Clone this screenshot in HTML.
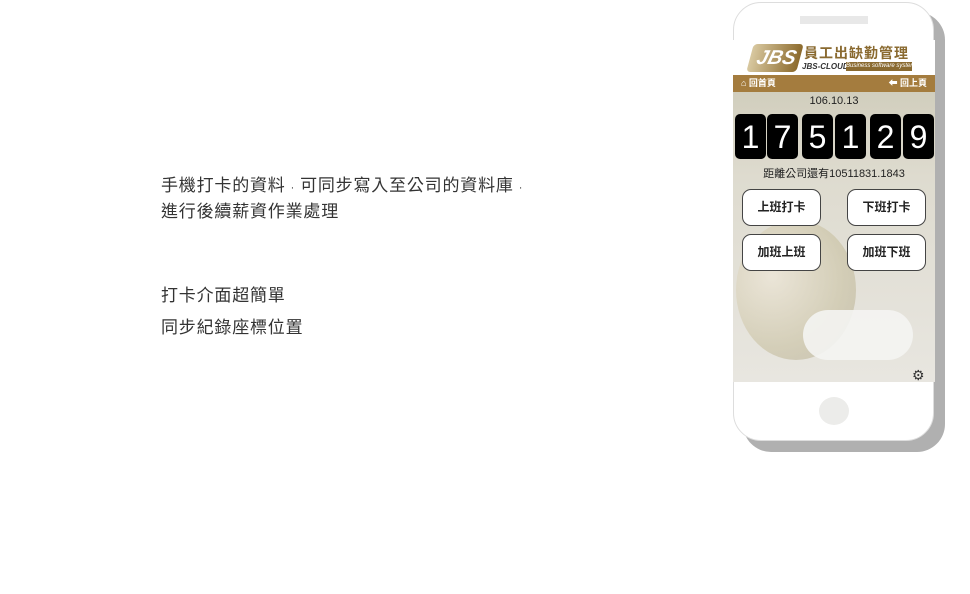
<!DOCTYPE html>
<html><head><meta charset="utf-8"><style>
body{margin:0;width:970px;height:594px;background:#fff;position:relative;overflow:hidden;font-family:"Liberation Sans","Noto Sans CJK TC",sans-serif}
.t{position:absolute;left:161px;font-size:17px;color:#333;line-height:24px;letter-spacing:0.8px}
.abs{position:absolute}
.digit{position:absolute;top:114px;width:31px;height:45px;background:#000;border-radius:5px;color:#fff;font-size:32px;text-align:center;line-height:46px}
.btn{position:absolute;width:77px;height:35px;border:1px solid #444;border-radius:9px;background:#fff;font-size:12px;font-weight:bold;text-align:center;line-height:35px;color:#222}
</style></head><body>
<div class="t" style="top:174px">手機打卡的資料<span style="font-size:11px;padding:0 5px">·</span>可同步寫入至公司的資料庫<span style="font-size:11px;padding:0 5px">·</span><br>進行後續薪資作業處理</div>
<div class="t" style="top:284px">打卡介面超簡單</div>
<div class="t" style="top:316px">同步紀錄座標位置</div>

<div class="abs" style="left:743px;top:12px;width:202px;height:440px;background:#b0b0b0;border-radius:0 28px 28px 28px"></div>
<div class="abs" style="left:733px;top:2px;width:201px;height:439px;background:#fff;border:1px solid #ddd;border-radius:28px;box-sizing:border-box"></div>
<div class="abs" style="left:800px;top:16px;width:68px;height:8px;background:#e8e8e8"></div>
<div class="abs" style="left:733px;top:40px;width:202px;height:342px;background:linear-gradient(#c9c6b2,#dedbcf 40%,#e8e6e0);overflow:hidden">
  <div class="abs" style="left:3px;top:180px;width:120px;height:140px;border-radius:50%;background:radial-gradient(circle at 30% 40%,#f0e8d8,#c8c0a0 60%,#b0a890);opacity:.6"></div>
  <div class="abs" style="left:70px;top:270px;width:110px;height:50px;border-radius:30px;background:#f4f4f2;opacity:.9"></div>
</div>
<div class="abs" style="left:733px;top:40px;width:202px;height:35px;background:#fff"></div>
<div class="abs" style="left:750px;top:44px;width:50px;height:28px;background:linear-gradient(90deg,#d8c8a0,#8c6a2c);border-radius:4px;transform:skewX(-15deg);color:#fff;font-weight:bold;font-style:italic;font-size:20px;line-height:28px;text-align:right;padding-right:4px;box-sizing:border-box">JBS</div>
<div class="abs" style="left:804px;top:43px;font-size:14px;font-weight:bold;color:#8a6a30;letter-spacing:1px">員工出缺勤管理</div>
<div class="abs" style="left:802px;top:62px;font-size:8px;font-weight:bold;font-style:italic;color:#333">JBS-CLOUD</div>
<div class="abs" style="left:846px;top:62px;width:66px;height:9px;background:#8a6a30;color:#fff;font-size:6px;line-height:9px;font-style:italic;overflow:hidden;white-space:nowrap">Business software system</div>
<div class="abs" style="left:733px;top:75px;width:202px;height:17px;background:#a47c3e;color:#fff;font-size:9px;font-weight:bold;line-height:17px">
  <span style="position:absolute;left:8px">⌂ 回首頁</span><span style="position:absolute;right:8px">⬅ 回上頁</span></div>
<div class="abs" style="left:733px;top:95px;width:202px;text-align:center;font-size:11px;color:#222">106.10.13</div>
<div class="digit" style="left:735px">1</div><div class="digit" style="left:767px">7</div>
<div class="digit" style="left:802px">5</div><div class="digit" style="left:835px">1</div>
<div class="digit" style="left:870px">2</div><div class="digit" style="left:903px">9</div>
<div class="abs" style="left:733px;top:165px;width:202px;text-align:center;font-size:11px;color:#222">距離公司還有10511831.1843</div>
<div class="btn" style="left:742px;top:189px">上班打卡</div>
<div class="btn" style="left:847px;top:189px">下班打卡</div>
<div class="btn" style="left:742px;top:234px">加班上班</div>
<div class="btn" style="left:847px;top:234px">加班下班</div>
<div class="abs" style="left:912px;top:367px;font-size:14px;color:#333">⚙</div>
<div class="abs" style="left:819px;top:397px;width:30px;height:28px;border-radius:50%;background:#ececea"></div>
</body></html>
